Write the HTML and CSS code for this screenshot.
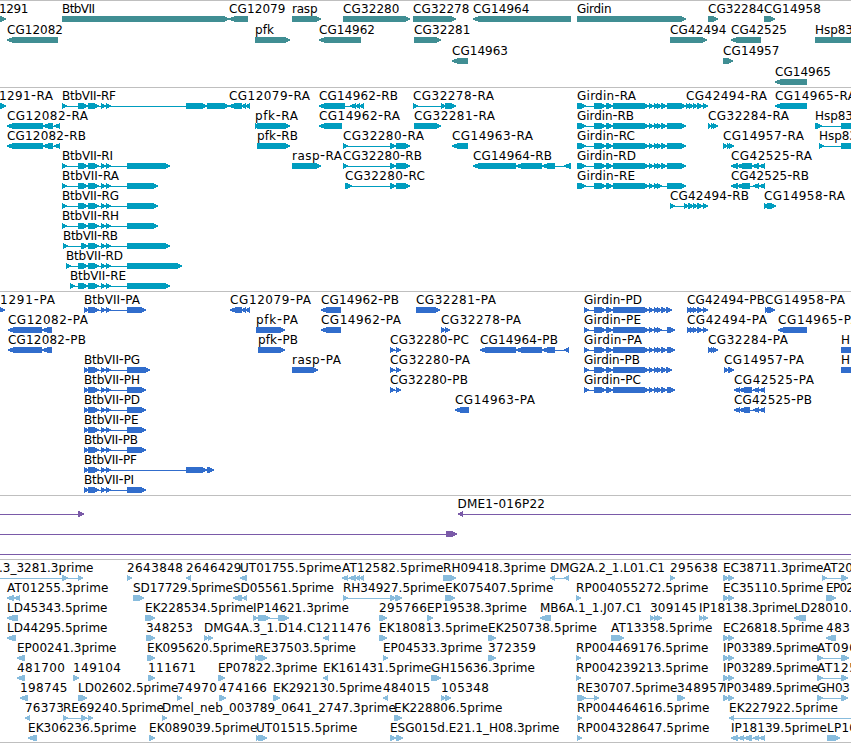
FILE: index.html
```html
<!DOCTYPE html>
<html lang="en">
<head>
<meta charset="utf-8">
<title>Genome browser</title>
<link rel="stylesheet" href="styles.css">
</head>
<body>
<main class="browser">
  <section class="track track-gene" data-track="gene"></section>
  <section class="track track-transcript" data-track="transcript"></section>
  <section class="track track-protein" data-track="protein"></section>
  <section class="track track-clone" data-track="clone"></section>
  <section class="track track-est" data-track="est"></section>
</main>
<script src="tracks.js"></script>
</body>
</html>
```
FILE: styles.css
```css
body {
  margin: 0;
  background: #fff;
  overflow: hidden;
}

.browser {
  display: flex;
  flex-direction: column;
  width: 851px;
  height: 743px;
}

.track {
  box-sizing: border-box;
  flex: none;
  border-top: 1px solid #bfbfbf;
  overflow: hidden;
}

.track-gene { height: 87px; color: #408e93; }
.track-transcript { height: 204px; color: #009dbf; }
.track-protein { height: 204px; color: #316dcc; }
.track-clone { height: 64px; color: #7a5aa8; }
.track-est { height: 184px; color: #88bcdd; border-bottom: 1px solid #bfbfbf; }

.canvas {
  display: block;
  width: 851px;
  height: 100%;
}

.feature {
  fill: currentColor;
  shape-rendering: crispEdges;
}

.label {
  fill: #000;
  font-family: "DejaVu Sans", sans-serif;
  font-size: 12px;
}

.dash {
  font-size: 14px;
}
```
FILE: tracks.js
```js
// One line per feature: row, strand, label start, label end, label, segments.
const bt = '78:88 88:99 101:106 106:111';
const bp = '84:88 88:99 101:106 106:111';
const gr = '577:586 594:606 606:613 613:649 649:654 654:658 657:662';
const gp = '584:589 594:606 606:613 613:649 649:654 654:658 657:662';
const ec = '723:729 728:734';

const tracks = {
  gene: { pitch: 21, data: `
0 > -1 28.5 1291 -20:6
0 > 62 95 BtbVII 62:229
0 < 229 285.5 CG12079 229:248
0 > 292 317.5 rasp 292:321
0 > 343 399.5 CG32280 343:410
0 > 413 469.5 CG32278 413:456
0 < 473 529.5 CG14964 473:571
0 > 577 611.5 Girdin 577:686
0 > 708 764 CG32284 708:718
0 > 764 821 CG14958 764:775
1 < 7 63 CG12082 7:58
1 > 255 274 pfk 255:290
1 < 319 375 CG14962 319:361
1 > 414 470.5 CG32281 414:441
1 > 670 726.5 CG42494 670:707
1 < 731 787 CG42525 731:761
1 > 815 853 Hsp83 815:870
2 < 452 508 CG14963 452:468
2 > 723 779.5 CG14957 723:733
3 < 775 831 CG14965 775:807` },
  transcript: { pitch: 20, data: `
0 > -1 53 1291-RA -20:6
0 > 62 116 BtbVII-RF 62:67 ${bt} 186:207 207:229
0 < 229 310 CG12079-RA 229:242 242:246 246:250
0 < 319 398 CG14962-RB 319:345 350:356 356:360 359:364
0 > 413 494 CG32278-RA 413:418 441:445 445:456
0 > 577 636 Girdin-RA ${gr} 661:667 667:686
0 > 686 767 CG42494-RA 686:690 689:694 693:698 697:703 703:708
0 < 775 856 CG14965-RA 775:807
1 < 7 88 CG12082-RA 7:43 43:53 54:60
1 > 255 298 pfk-RA 255:258 257:290
1 < 319 400 CG14962-RA 319:342
1 > 414 495 CG32281-RA 414:441
1 > 577 634 Girdin-RB ${gr} 661:667 667:686
1 > 708 789 CG32284-RA 708:711 711:714 713:718
1 > 815 853 Hsp83 815:822 841:870
2 < 7 86 CG12082-RB 7:43 43:53 54:60
2 > 257 298 pfk-RB 257:290
2 > 343 424 CG32280-RA 343:348 390:396 396:410
2 < 452 533 CG14963-RA 452:468
2 > 577 635 Girdin-RC ${gr} 661:667 667:686
2 > 723 804 CG14957-RA 723:728 727:731 729:734
2 > 819 857 Hsp83 819:824 841:870
3 > 62 113 BtbVII-RI 62:67 ${bt} 127:170
3 > 292 342 rasp-RA 292:321
3 > 343 422 CG32280-RB 343:348 390:396 396:410
3 < 473 552 CG14964-RB 473:516 516:542 542:555 564:571
3 > 577 636 Girdin-RD ${gr} 661:667 667:686
3 < 731 812 CG42525-RA 731:738 737:752 752:759 759:765
4 > 62 119 BtbVII-RA 62:67 ${bt} 127:158
4 > 345 425 CG32280-RC 345:352 390:396 396:410
4 > 577 635 Girdin-RE ${gr} 667:686
4 < 731 809 CG42525-RB 731:738 737:750 753:759 759:765
5 > 62 119 BtbVII-RG 62:67 ${bt} 127:158
5 > 670 749 CG42494-RB 670:675 684:689 688:694 693:698 697:703 703:708
5 > 764 845 CG14958-RA 764:768 767:776
6 > 62 119 BtbVII-RH 62:67 ${bt} 127:158
7 > 63 118 BtbVII-RB 63:68 81:88 88:99 101:106 106:111 127:170
8 > 66 123 BtbVII-RD 66:71 ${bt} 127:182
9 > 70 126 BtbVII-RE 70:75 ${bt} 127:170` },
  protein: { pitch: 20, data: `
0 > 0 55 1291-PA -20:5
0 > 84 140 BtbVII-PA ${bp} 127:146
0 < 230 311 CG12079-PA 230:242 242:246 246:250
0 < 321 399 CG14962-PB 321:341
0 > 416 496 CG32281-PA 416:440
0 > 584 642 Girdin-PD ${gp} 661:667 666:672
0 > 687 765 CG42494-PB 687:691 690:695 693:698 697:703 703:708
0 > 765 845 CG14958-PA 765:769 767:775
1 < 8 88 CG12082-PA 8:42 42:52
1 > 256 298 pfk-PA 256:285
1 < 321 401 CG14962-PA 321:341
1 > 441 521 CG32278-PA 441:445 445:450
1 > 584 641 Girdin-PE ${gp} 667:675
1 > 687 767 CG42494-PA 687:691 690:695 693:698 697:703 703:708
1 < 778 859 CG14965-PA 778:807
2 < 8 86 CG12082-PB 8:42 42:52
2 > 258 298 pfk-PB 258:285
2 > 390 469 CG32280-PC 390:395 396:401
2 < 480 558 CG14964-PB 480:516 516:542 542:555 564:569
2 > 584 642 Girdin-PA ${gp} 661:667 667:675
2 > 708 788 CG32284-PA 708:712 711:714 713:718
2 > 841 850 H 841:870
3 > 84 140 BtbVII-PG ${bp} 127:150
3 > 292 341 rasp-PA 292:318
3 > 390 470 CG32280-PA 390:395 396:401
3 > 584 640 Girdin-PB ${gp} 661:667 666:672
3 > 724 804 CG14957-PA 724:729 728:734
3 > 841 850 H 841:870
4 > 84 140 BtbVII-PH ${bp} 127:146
4 > 390 468 CG32280-PB 390:395 396:401
4 > 584 641 Girdin-PC ${gp} 661:667 667:675
4 < 734 814 CG42525-PA 734:740 739:752 753:759 759:765
5 > 84 140 BtbVII-PD ${bp} 127:146
5 < 455 535 CG14963-PA 455:469
5 < 734 812 CG42525-PB 734:740 739:750 753:759 759:765
6 > 84 138.5 BtbVII-PE ${bp} 127:146
7 > 84 138 BtbVII-PB ${bp} 127:146
8 > 84 137 BtbVII-PF ${bp} 186:207 207:214
9 > 84 134 BtbVII-PI ${bp} 127:146` },
  clone: { pitch: 20, data: `
0 > 0 0 _ -20:-10 78:84
0 < 457.5 545 DME1-016P22 458:463 900:910
1 > 0 0 _ -20:-10 446:457
2 > 0 0 _ -20:-10 900:910` },
  est: { pitch: 20, data: `
0 > -1 93.5 .3_3281.3prime -20:-10 62:68 78:83
0 > 127 183 2643848 127:132
0 < 186 241.5 2646429 186:191
0 < 240 341.5 UT01755.5prime 240:247
0 < 342 443.5 AT12582.5prime 342:348 349:356 356:360 359:364
0 > 443 546 RH09418.3prime 443:446 444:456
0 < 550 665 DMG2A.2_1.L01.C1 550:555 564:569
0 > 670 718 295638 670:675
0 > 723 823.5 EC38711.3prime ${ec}
0 > 823 853 AT20 822:827 841:848
1 < 7 108.5 AT01255.3prime 7:14 14:20
1 > 133 233 SD17729.5prime 133:144
1 < 233 334 SD05561.5prime 233:242 242:247
1 > 343 445 RH34927.5prime 343:348 390:396 395:402
1 > 445 553.5 EK075407.5prime 445:455
1 > 576 708.5 RP004055272.5prime 576:581
1 > 723 823.5 EC35110.5prime ${ec}
1 > 826 854 EP02 826:836
2 < 7 107.5 LD45343.5prime 7:18
2 > 145 253.5 EK228534.5prime 145:155
2 > 253 349 IP14621.3prime 253:258 258:270 278:289
2 > 379 427 295766 379:387
2 > 427 527 EP19538.3prime 427:433
2 < 540 642 MB6A.1_1.J07.C1 540:551
2 > 650 697 309145 650:655 654:658 657:662
2 > 699 794.5 IP18138.3prime 699:703 703:708
2 < 794 852 LD28010. 794:806
3 < 7 107.5 LD44295.5prime 7:16
3 > 146 193 348253 146:155
3 > 204 323 DMG4A.3_1.D14.C1 204:208 208:213
3 < 323 371 211476 323:329
3 > 379 488 EK180813.5prime 379:387
3 > 488 597 EK250738.5prime 488:496
3 > 611 712.5 AT13358.5prime 611:624
3 > 723 823.5 EC26818.5prime ${ec}
3 < 826 850 483 826:836
4 < 17 116.5 EP00241.3prime 17:25
4 > 147 255.5 EK095620.5prime 147:155
4 > 255 356 RE37503.5prime 255:259 258:267
4 > 383 482.5 EP04533.3prime 383:388
4 > 488 536 372359 488:496
4 > 576 708.5 RP004469176.5prime 576:581
4 > 723 818.5 IP03389.5prime ${ec}
4 > 817 857 AT090 817:823 841:849
5 < 17 65 481700 17:25
5 > 73 121 149104 73:79
5 > 148 196 111671 148:155
5 > 218 317.5 EP07822.3prime 218:225
5 < 323 431.5 EK161431.5prime 323:328
5 > 431 535 GH15636.3prime 431:441
5 > 576 708.5 RP004239213.5prime 576:581
5 > 723 818.5 IP03289.5prime ${ec}
5 > 817 857 AT125 817:823 841:848
6 < 20 67.5 198745 20:28
6 > 78 178.5 LD02602.5prime 78:87
6 > 177 217 74970 177:182
6 > 219 267 474166 219:226
6 > 273 382 EK292130.5prime 273:280
6 < 383 430.5 484015 383:388
6 > 441 489 105348 441:445 445:451
6 > 577 677.5 RE30707.5prime 577:586 594:599
6 > 677 725 348957 677:685
6 > 723 818.5 IP03489.5prime ${ec}
6 > 817 850 GH03 817:823 841:848
7 < 25 64 76373 25:30
7 > 63 164 RE69240.5prime 63:68 81:87 88:93
7 > 162 396 Dmel_neb_003789_0641_2747.3prime 162:167
7 > 394 502.5 EK228806.5prime 394:402
7 > 577 709.5 RP004464616.5prime 577:582
7 < 729 838 EK227922.5prime 729:734 900:910
8 < 28 136.5 EK306236.5prime 28:37
8 > 149 257.5 EK089039.5prime 149:155
8 > 256 357.5 UT01515.5prime 256:259 258:267
8 > 390 559.5 ESG015d.E21.1_H08.3prime 390:396 396:403
8 > 577 709.5 RP004328647.5prime 577:582
8 < 731 827 IP18139.5prime 731:738 738:744 744:752 753:759 759:765
8 > 827 857 LP10 827:840` }
};

// Block with a six-pixel tapered end pointing along the strand.
function segment(a, b, y, strand) {
  const head = Math.min(6, b - a);
  const [tail, tip, s] = strand === '>' ? [a, b, -1] : [b, a, 1];
  const neck = tip + s * head;
  const mid = tip + s * head / 2;
  return `M${tail} ${y}H${neck}L${mid} ${y + 1}L${tip} ${y + 2.5}V${y + 3.5}L${mid} ${y + 5}L${neck} ${y + 6}H${tail}Z`;
}

document.querySelectorAll('.track').forEach((section) => {
  const { pitch, data } = tracks[section.dataset.track];
  let out = '';
  data.trim().split('\n').forEach((line) => {
    const [row, strand, start, end, name, ...parts] = line.split(' ');
    const segs = parts.map((p) => p.split(':').map(Number));
    const y = row * pitch + 15;
    segs.forEach(([a, b]) => {
      out += `<path class="feature" d="${segment(a, b, y, strand)}"/>`;
    });
    if (segs.length > 1) {
      const from = segs[0][0];
      out += `<rect class="feature" x="${from}" y="${y + 3}" width="${segs[segs.length - 1][1] - from}" height="1"/>`;
    }
    if (name !== '_') {
      const text = name.replace('-', '<tspan class="dash">-</tspan>');
      out += `<text class="label" x="${start}" y="${row * pitch + 12}" textLength="${end - start}">${text}</text>`;
    }
  });
  section.innerHTML = `<svg class="canvas">${out}</svg>`;
});
```
